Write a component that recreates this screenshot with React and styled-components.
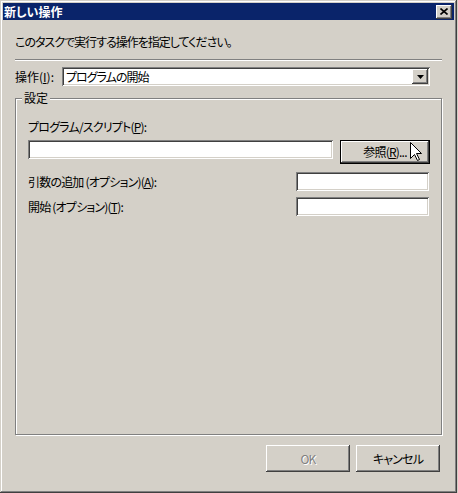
import styled, { createGlobalStyle } from "styled-components";

const GlobalStyle = createGlobalStyle`
  html, body {
    margin: 0;
    padding: 0;
    background: #d4d0c8;
  }
  body {
    font-family: "Noto Sans CJK JP", "Noto Sans", sans-serif;
    font-size: 12px;
    font-feature-settings: "palt";
    letter-spacing: -0.8px;
    color: #000;
  }
`;

const raised = `
  box-shadow: inset -1px -1px #404040, inset 1px 1px #fff,
    inset -2px -2px #808080, inset 2px 2px #d4d0c8;
`;

const sunken = `
  box-shadow: inset 1px 1px #808080, inset -1px -1px #fff,
    inset 2px 2px #404040, inset -2px -2px #d4d0c8;
`;

const Window = styled.div`
  position: relative;
  width: 457px;
  height: 493px;
  box-sizing: border-box;
  padding: 3px;
  display: flex;
  flex-direction: column;
  background: #d4d0c8;
  box-shadow: inset -1px -1px #404040, inset 1px 1px #d4d0c8,
    inset -2px -2px #808080, inset 2px 2px #fff;
`;

const TitleBar = styled.div`
  height: 17px;
  flex: none;
  display: flex;
  align-items: center;
  justify-content: space-between;
  padding: 0 2px 0 1px;
  background: #0a246a;
  color: #fff;
  font-weight: bold;
  line-height: 14px;
  letter-spacing: 0;
`;

const CloseButton = styled.div`
  width: 16px;
  height: 14px;
  display: flex;
  align-items: center;
  justify-content: center;
  background: #d4d0c8;
  ${raised}
`;

const Body = styled.div`
  flex: 1;
  display: flex;
  flex-direction: column;
  padding: 0 12px;
`;

const Text = styled.div`
  line-height: 14px;
  white-space: nowrap;
`;

const Instruction = styled(Text)`
  margin-top: 15px;
  letter-spacing: -1px;
`;

const Separator = styled.div`
  margin-top: 10px;
  height: 0;
  border-top: 1px solid #808080;
  border-bottom: 1px solid #fff;
`;

const ComboRow = styled.div`
  margin-top: 6px;
  display: flex;
  align-items: center;
  padding-right: 12px;
`;

const ComboLabel = styled(Text)`
  width: 47px;
  flex: none;
  letter-spacing: 0;
`;

const Combo = styled.div`
  flex: 1;
  height: 19px;
  box-sizing: border-box;
  padding: 2px;
  display: flex;
  align-items: center;
  background: #fff;
  ${sunken}
`;

const ComboValue = styled.div`
  flex: 1;
  padding-left: 2px;
  line-height: 14px;
  letter-spacing: -1px;
`;

const DropButton = styled.div`
  width: 16px;
  height: 15px;
  display: flex;
  align-items: center;
  justify-content: center;
  background: #d4d0c8;
  ${raised}
`;

const GroupBox = styled.div`
  position: relative;
  margin-top: 12px;
  height: 337px;
  box-sizing: border-box;
  border: 1px solid #808080;
  box-shadow: inset 1px 1px #fff, 1px 1px #fff;
  padding: 21px 11px 0 12px;
  display: flex;
  flex-direction: column;
`;

const GroupCaption = styled.div`
  position: absolute;
  top: -8px;
  left: 6px;
  padding: 0 2px;
  line-height: 14px;
  letter-spacing: 0;
  background: #d4d0c8;
`;

const FieldRow = styled.div`
  display: flex;
  align-items: ${(p) => (p.$top ? "flex-start" : "center")};
  justify-content: space-between;
  gap: 7px;
  margin-top: ${(p) => p.$gap}px;
`;

const TextBox = styled.div`
  height: 19px;
  width: ${(p) => (p.$width ? `${p.$width}px` : "auto")};
  flex: ${(p) => (p.$width ? "none" : "1")};
  box-sizing: border-box;
  background: #fff;
  margin-right: ${(p) => (p.$width ? "1px" : "0")};
  ${sunken}
`;

const Button = styled.div`
  width: ${(p) => p.$width}px;
  height: ${(p) => p.$height}px;
  flex: none;
  box-sizing: border-box;
  display: flex;
  align-items: center;
  justify-content: center;
  line-height: 14px;
  background: #d4d0c8;
  color: ${(p) => (p.$disabled ? "#808080" : "#000")};
  text-shadow: ${(p) => (p.$disabled ? "1px 1px #fff" : "none")};
  border: ${(p) => (p.$default ? "1px solid #000" : "none")};
  ${raised}
`;

const ButtonRow = styled.div`
  margin-top: 10px;
  display: flex;
  justify-content: flex-end;
  gap: 6px;
  padding-right: 2px;
`;

const U = styled.span`
  text-decoration: underline;
  text-underline-offset: 1px;
`;

const Cursor = styled.svg`
  position: absolute;
  left: 410px;
  top: 142px;
`;

export default function App() {
  return (
    <>
      <GlobalStyle />
      <Window>
        <TitleBar>
          <span>新しい操作</span>
          <CloseButton>
            <svg width="8" height="7" viewBox="0 0 8 7">
              <path d="M0.5 0.5 L7.5 6.5 M7.5 0.5 L0.5 6.5" stroke="#000" strokeWidth="1.6" />
            </svg>
          </CloseButton>
        </TitleBar>
        <Body>
          <Instruction>このタスクで実行する操作を指定してください。</Instruction>
          <Separator />
          <ComboRow>
            <ComboLabel>
              操作(<U>I</U>):
            </ComboLabel>
            <Combo>
              <ComboValue>プログラムの開始</ComboValue>
              <DropButton>
                <svg width="7" height="4" viewBox="0 0 7 4">
                  <polygon points="0,0 7,0 3.5,4" fill="#000" />
                </svg>
              </DropButton>
            </Combo>
          </ComboRow>
          <GroupBox>
            <GroupCaption>設定</GroupCaption>
            <Text>
              プログラム/スクリプト(<U>P</U>):
            </Text>
            <FieldRow $gap={6} $top>
              <TextBox />
              <Button $width={90} $height={24} $default>
                参照(<U>R</U>)...
              </Button>
            </FieldRow>
            <FieldRow $gap={8}>
              <Text>
                引数の追加 (オプション)(<U>A</U>):
              </Text>
              <TextBox $width={133} />
            </FieldRow>
            <FieldRow $gap={6}>
              <Text>
                開始 (オプション)(<U>T</U>):
              </Text>
              <TextBox $width={133} />
            </FieldRow>
          </GroupBox>
          <ButtonRow>
            <Button $width={84} $height={27} $disabled>
              OK
            </Button>
            <Button $width={84} $height={27}>
              キャンセル
            </Button>
          </ButtonRow>
        </Body>
        <Cursor width="13" height="20" viewBox="0 0 13 20">
          <path
            d="M0.5 0.5 L0.5 16.5 L4.5 12.5 L7.5 18.5 L9.5 17.5 L6.5 11.5 L11.5 11.5 Z"
            fill="#fff"
            stroke="#000"
            strokeWidth="1"
          />
        </Cursor>
      </Window>
    </>
  );
}
